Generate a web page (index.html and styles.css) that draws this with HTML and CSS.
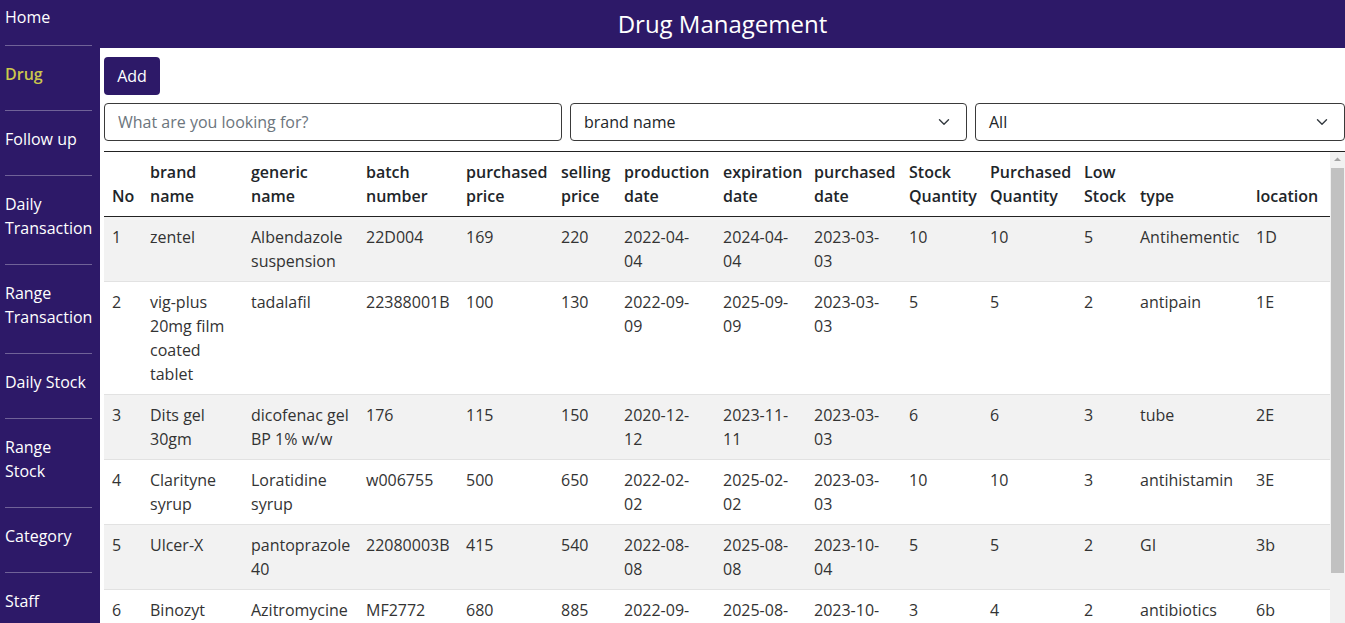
FILE: index.html
```html
<!DOCTYPE html>
<html lang="en">
<head>
<meta charset="utf-8">
<title>Drug Management</title>
<link rel="stylesheet" href="styles.css">
</head>
<body>
<div class="app">
  <nav class="sidebar">
    <a class="nav-item first">Home</a>
    <a class="nav-item active">Drug</a>
    <a class="nav-item">Follow up</a>
    <a class="nav-item">Daily Transaction</a>
    <a class="nav-item">Range Transaction</a>
    <a class="nav-item">Daily Stock</a>
    <a class="nav-item">Range Stock</a>
    <a class="nav-item">Category</a>
    <a class="nav-item">Staff</a>
  </nav>
  <main class="main">
    <header class="topbar"><h1 class="title">Drug Management</h1></header>
    <section class="content">
      <div class="actions"><button class="btn-add">Add</button></div>
      <div class="filters">
        <input class="search" type="text" placeholder="What are you looking for?">
        <div class="select select-field"><span>brand name</span><svg width="12" height="8" viewBox="0 0 12 8"><path d="M1.5 1.8 6 6.2l4.5-4.4" fill="none" stroke="#343a40" stroke-width="1.4" stroke-linecap="round" stroke-linejoin="round"/></svg></div>
        <div class="select select-type"><span>All</span><svg width="12" height="8" viewBox="0 0 12 8"><path d="M1.5 1.8 6 6.2l4.5-4.4" fill="none" stroke="#343a40" stroke-width="1.4" stroke-linecap="round" stroke-linejoin="round"/></svg></div>
      </div>
      <div class="table-wrap">
        <div class="table-scroll">
          <table class="drugs">
            <colgroup>
              <col class="c-no"><col class="c-brand"><col class="c-generic"><col class="c-batch"><col class="c-pprice"><col class="c-sprice"><col class="c-prod"><col class="c-exp"><col class="c-pdate"><col class="c-stock"><col class="c-pqty"><col class="c-low"><col class="c-type"><col class="c-loc">
            </colgroup>
            <thead>
              <tr>
                <th>No</th><th>brand name</th><th>generic name</th><th>batch number</th><th>purchased price</th><th>selling price</th><th>production date</th><th>expiration date</th><th>purchased date</th><th>Stock Quantity</th><th>Purchased Quantity</th><th>Low Stock</th><th>type</th><th>location</th>
              </tr>
            </thead>
            <tbody>
              <tr><td>1</td><td>zentel</td><td>Albendazole suspension</td><td>22D004</td><td>169</td><td>220</td><td>2022-04-04</td><td>2024-04-04</td><td>2023-03-03</td><td>10</td><td>10</td><td>5</td><td>Antihementic</td><td>1D</td></tr>
              <tr><td>2</td><td>vig-plus 20mg film coated tablet</td><td>tadalafil</td><td>22388001B</td><td>100</td><td>130</td><td>2022-09-09</td><td>2025-09-09</td><td>2023-03-03</td><td>5</td><td>5</td><td>2</td><td>antipain</td><td>1E</td></tr>
              <tr><td>3</td><td>Dits gel 30gm</td><td>dicofenac gel BP 1% w/w</td><td>176</td><td>115</td><td>150</td><td>2020-12-12</td><td>2023-11-11</td><td>2023-03-03</td><td>6</td><td>6</td><td>3</td><td>tube</td><td>2E</td></tr>
              <tr><td>4</td><td>Clarityne syrup</td><td>Loratidine syrup</td><td>w006755</td><td>500</td><td>650</td><td>2022-02-02</td><td>2025-02-02</td><td>2023-03-03</td><td>10</td><td>10</td><td>3</td><td>antihistamin</td><td>3E</td></tr>
              <tr><td>5</td><td>Ulcer-X</td><td>pantoprazole 40</td><td>22080003B</td><td>415</td><td>540</td><td>2022-08-08</td><td>2025-08-08</td><td>2023-10-04</td><td>5</td><td>5</td><td>2</td><td>GI</td><td>3b</td></tr>
              <tr><td>6</td><td>Binozyt</td><td>Azitromycine</td><td>MF2772</td><td>680</td><td>885</td><td>2022-09-15</td><td>2025-08-15</td><td>2023-10-04</td><td>3</td><td>4</td><td>2</td><td>antibiotics</td><td>6b</td></tr>
            </tbody>
          </table>
        </div>
        <div class="scrollbar" aria-hidden="true">
          <div class="sb-arrow"><svg width="15" height="15" viewBox="0 0 15 15"><path d="M4 9h7L7.5 5.5z" fill="#a3a3a3"/></svg></div>
          <div class="sb-thumb"></div>
        </div>
      </div>
    </section>
  </main>
</div>
</body>
</html>
```

FILE: styles.css
```css
* { box-sizing: border-box; }
html, body { margin: 0; padding: 0; height: 100%; overflow: hidden; }
body {
  font-family: "Open Sans", "Noto Sans", sans-serif;
  font-size: 16px;
  line-height: 24px;
  color: #212529;
  background: #fff;
}
.app { display: flex; height: 100vh; }

.sidebar {
  width: 100px;
  flex: 0 0 100px;
  background: #2d1968;
  padding-left: 5px;
  display: flex;
  flex-direction: column;
}
.nav-item {
  display: block;
  width: 87px;
  color: #fff;
  text-decoration: none;
  padding: 16px 0 24px;
  border-top: 1px solid rgba(255,255,255,0.32);
  line-height: 24px;
}
.nav-item.first { border-top: none; padding: 5px 0 16px; }
.nav-item.active { color: #cbc64c; font-weight: 600; }

.main { flex: 1; min-width: 0; display: flex; flex-direction: column; }
.topbar {
  height: 48px;
  flex: 0 0 48px;
  background: #2d1968;
  display: flex;
  align-items: center;
  justify-content: center;
}
.title { margin: 0; color: #fff; font-weight: 400; font-size: 24px; line-height: 32px; }

.content {
  flex: 1;
  min-height: 0;
  padding: 9px 0 0 4px;
  display: flex;
  flex-direction: column;
}
.btn-add {
  font-family: inherit;
  font-size: 16px;
  line-height: 24px;
  color: #fff;
  background: #2d1968;
  border: none;
  border-radius: 4px;
  padding: 7px 13px;
  height: 38px;
  width: 56px;
}
.filters { display: flex; gap: 8px; margin-top: 8px; }
.search, .select {
  height: 38px;
  border: 1px solid #3a3a3a;
  border-radius: 4px;
  font-family: inherit;
  font-size: 16px;
  line-height: 24px;
  color: #212529;
  padding: 6px 13px;
  background: #fff;
}
.search { flex: 0 0 458px; outline: none; }
.search::placeholder { color: #6c757d; }
.select { display: flex; align-items: center; justify-content: space-between; padding-right: 16px; }
.select-field { flex: 0 0 397px; }
.select-type { flex: 1; }

.table-wrap {
  flex: 1;
  min-height: 0;
  margin-top: 10px;
  border-top: 1px solid #222;
  display: flex;
}
.table-scroll { flex: 1; min-width: 0; overflow: hidden; }
.scrollbar {
  flex: 0 0 15px;
  background: #f1f1f1;
  display: flex;
  flex-direction: column;
  align-items: center;
}
.sb-arrow { height: 15px; width: 15px; }
.sb-arrow svg { display: block; }
.sb-thumb { width: 13px; height: 405px; margin-top: 1px; background: #c1c1c1; }

.drugs {
  width: 1226px;
  table-layout: fixed;
  border-collapse: collapse;
  color: #333;
}
.c-no { width: 38px; } .c-brand { width: 101px; } .c-generic { width: 115px; }
.c-batch { width: 100px; } .c-pprice { width: 95px; } .c-sprice { width: 63px; }
.c-prod { width: 99px; } .c-exp { width: 91px; } .c-pdate { width: 95px; }
.c-stock { width: 81px; } .c-pqty { width: 94px; } .c-low { width: 56px; }
.c-type { width: 116px; } .c-loc { width: 82px; }
.drugs th {
  text-align: left;
  vertical-align: bottom;
  font-weight: 600;
  color: #212529;
  padding: 8px;
  border-bottom: 1px solid #222;
}
.drugs td {
  vertical-align: top;
  padding: 8px;
  border-bottom: 1px solid #e2e2e2;
}
.drugs tbody tr:nth-child(odd) td { background: #f2f2f2; }
```
